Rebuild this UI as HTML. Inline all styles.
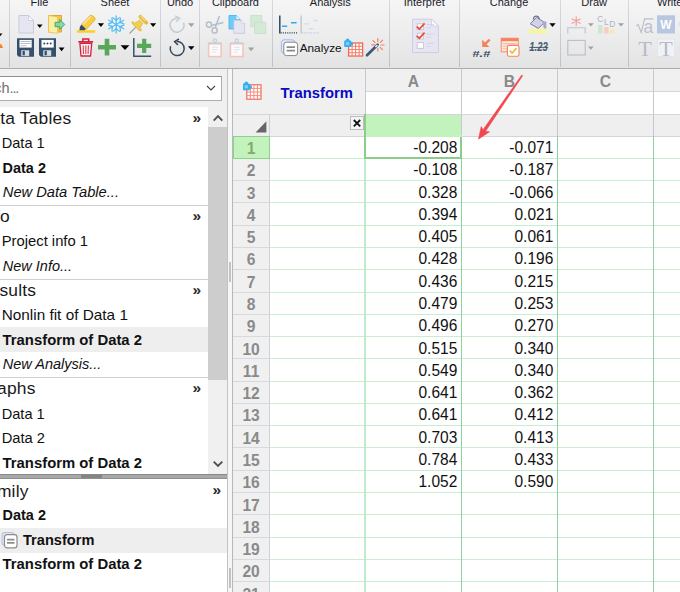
<!DOCTYPE html>
<html><head><meta charset="utf-8"><title>Transform</title>
<style>
html,body{margin:0;padding:0;background:#fff;}
body{width:680px;height:592px;overflow:hidden;font-family:"Liberation Sans",sans-serif;}
#root{position:relative;width:680px;height:592px;overflow:hidden;background:#fff;}
.abs{position:absolute;display:block;}
.hl{left:270px;width:410px;height:1px;background:#c8eed1;}
.hlh{left:233px;width:37px;height:1px;background:#d6d9dd;}
.colh{text-align:center;font-weight:bold;font-size:15.6px;color:#8a8a8a;}
.rown{text-align:center;font-weight:bold;font-size:15.6px;color:#8a8a8a;}
.rown.sel{color:#86a86e;}
.val{text-align:right;font-size:15.5px;color:#111;transform:scaleY(1.1);transform-origin:0 17.4px;}
.title{font-weight:bold;font-size:14.8px;color:#0a0ac2;white-space:nowrap;}
/* toolbar */
#tb{left:0;top:0;width:680px;height:68px;background:linear-gradient(#f5f5f5,#eeeeee 45%,#e3e3e3);}
#tbline{left:0;top:68.3px;width:680px;height:1.2px;background:#acacac;}
.sep{top:0;width:1.4px;height:66.5px;background:linear-gradient(#d6d9df,#bcc2cc);}
.glab{top:-5.2px;font-size:11px;line-height:14px;color:#1a1a2a;white-space:nowrap;}
/* navigator */
#navbg{left:0;top:69px;width:228px;height:523px;background:#f0f0f0;}
.nh{left:0;letter-spacing:0.2px;font-size:17.4px;line-height:24px;height:24px;color:#1a1a1a;white-space:nowrap;}
.ni{left:1.7px;font-size:15px;line-height:24px;height:24px;color:#111;white-space:nowrap;}
.b{font-weight:bold;font-size:14.6px;left:2.6px;}
.i{font-style:italic;font-size:14.5px;left:2.8px;}
.raq{font-size:15.5px;font-weight:bold;line-height:24px;color:#2a2a2a;}

</style></head>
<body>
<div id="root">
<!-- sheet -->
<div class="abs" style="left:233px;top:69px;width:447px;height:23px;background:#f0f0f0"></div>
<div class="abs" style="left:233px;top:69px;width:133px;height:45px;background:#f0f0f0"></div>
<div class="abs" style="left:233px;top:114px;width:447px;height:22px;background:#efefef"></div>
<div class="abs" style="left:366px;top:114px;width:96px;height:22px;background:#c3f3bd"></div>
<div class="abs" style="left:233px;top:136px;width:37px;height:456px;background:#f0f0f0"></div>
<div class="abs" style="left:233px;top:136px;width:37px;height:22px;background:#c3f3bd"></div>
<div class="abs hl" style="top:157.8px"></div>
<div class="abs hlh" style="top:157.8px"></div>
<div class="abs hl" style="top:180.1px"></div>
<div class="abs hlh" style="top:180.1px"></div>
<div class="abs hl" style="top:202.3px"></div>
<div class="abs hlh" style="top:202.3px"></div>
<div class="abs hl" style="top:224.6px"></div>
<div class="abs hlh" style="top:224.6px"></div>
<div class="abs hl" style="top:246.9px"></div>
<div class="abs hlh" style="top:246.9px"></div>
<div class="abs hl" style="top:269.2px"></div>
<div class="abs hlh" style="top:269.2px"></div>
<div class="abs hl" style="top:291.5px"></div>
<div class="abs hlh" style="top:291.5px"></div>
<div class="abs hl" style="top:313.7px"></div>
<div class="abs hlh" style="top:313.7px"></div>
<div class="abs hl" style="top:336.0px"></div>
<div class="abs hlh" style="top:336.0px"></div>
<div class="abs hl" style="top:358.3px"></div>
<div class="abs hlh" style="top:358.3px"></div>
<div class="abs hl" style="top:380.6px"></div>
<div class="abs hlh" style="top:380.6px"></div>
<div class="abs hl" style="top:402.9px"></div>
<div class="abs hlh" style="top:402.9px"></div>
<div class="abs hl" style="top:425.1px"></div>
<div class="abs hlh" style="top:425.1px"></div>
<div class="abs hl" style="top:447.4px"></div>
<div class="abs hlh" style="top:447.4px"></div>
<div class="abs hl" style="top:469.7px"></div>
<div class="abs hlh" style="top:469.7px"></div>
<div class="abs hl" style="top:492.0px"></div>
<div class="abs hlh" style="top:492.0px"></div>
<div class="abs hl" style="top:514.3px"></div>
<div class="abs hlh" style="top:514.3px"></div>
<div class="abs hl" style="top:536.5px"></div>
<div class="abs hlh" style="top:536.5px"></div>
<div class="abs hl" style="top:558.8px"></div>
<div class="abs hlh" style="top:558.8px"></div>
<div class="abs hl" style="top:581.1px"></div>
<div class="abs hlh" style="top:581.1px"></div>
<div class="abs hl" style="top:603.4px"></div>
<div class="abs hlh" style="top:603.4px"></div>
<div class="abs" style="left:366px;top:91px;width:314px;height:1px;background:#d4d6da"></div>
<div class="abs" style="left:233px;top:113.5px;width:447px;height:1px;background:#d4d6da"></div>
<div class="abs" style="left:233px;top:135.5px;width:447px;height:1px;background:#cfd6dc"></div>
<div class="abs" style="left:365.0px;top:69px;width:1px;height:67px;background:#c6c9cf"></div>
<div class="abs" style="left:461.0px;top:69px;width:1px;height:67px;background:#c6c9cf"></div>
<div class="abs" style="left:557.0px;top:69px;width:1px;height:67px;background:#c6c9cf"></div>
<div class="abs" style="left:653.0px;top:69px;width:1px;height:67px;background:#c6c9cf"></div>
<div class="abs" style="left:269px;top:114px;width:1px;height:478px;background:#cdd0d6"></div>
<div class="abs" style="left:232.3px;top:69px;width:1px;height:523px;background:#bcbcbc"></div>
<div class="abs" style="left:364px;top:136px;width:2px;height:456px;background:#bfecc9"></div>
<div class="abs" style="left:461.0px;top:136px;width:1px;height:456px;background:#8bd59c"></div>
<div class="abs" style="left:557.0px;top:136px;width:1px;height:456px;background:#8bd59c"></div>
<div class="abs" style="left:653.0px;top:136px;width:1px;height:456px;background:#8bd59c"></div>
<div class="abs" style="left:364px;top:114px;width:2px;height:45px;background:#8ace8a"></div>
<div class="abs" style="left:364px;top:157px;width:98.3px;height:1.6px;background:#8ace8a"></div>
<div class="abs" style="left:460.3px;top:136px;width:2px;height:22.5px;background:#8ace8a"></div>
<div class="abs" style="left:366px;top:135px;width:95.5px;height:1.5px;background:#c3f3bd"></div>
<div class="abs" style="left:233px;top:136px;width:36.8px;height:22.6px;box-sizing:border-box;border:1.2px solid #8fd08f"></div>
<div class="abs colh" style="left:365.5px;top:69px;width:96px;height:22px;line-height:25px">A</div>
<div class="abs colh" style="left:461.5px;top:69px;width:96px;height:22px;line-height:25px">B</div>
<div class="abs colh" style="left:557.5px;top:69px;width:96px;height:22px;line-height:25px">C</div>
<div class="abs rown sel" style="left:232.6px;top:136.0px;width:37px;height:22px;line-height:25.8px">1</div>
<div class="abs val" style="left:366px;top:136.0px;width:91.3px;height:22px;line-height:24.4px">-0.208</div>
<div class="abs val" style="left:462px;top:136.0px;width:91.3px;height:22px;line-height:24.4px">-0.071</div>
<div class="abs rown" style="left:232.6px;top:158.3px;width:37px;height:22px;line-height:25.8px">2</div>
<div class="abs val" style="left:366px;top:158.3px;width:91.3px;height:22px;line-height:24.4px">-0.108</div>
<div class="abs val" style="left:462px;top:158.3px;width:91.3px;height:22px;line-height:24.4px">-0.187</div>
<div class="abs rown" style="left:232.6px;top:180.6px;width:37px;height:22px;line-height:25.8px">3</div>
<div class="abs val" style="left:366px;top:180.6px;width:91.3px;height:22px;line-height:24.4px">0.328</div>
<div class="abs val" style="left:462px;top:180.6px;width:91.3px;height:22px;line-height:24.4px">-0.066</div>
<div class="abs rown" style="left:232.6px;top:202.8px;width:37px;height:22px;line-height:25.8px">4</div>
<div class="abs val" style="left:366px;top:202.8px;width:91.3px;height:22px;line-height:24.4px">0.394</div>
<div class="abs val" style="left:462px;top:202.8px;width:91.3px;height:22px;line-height:24.4px">0.021</div>
<div class="abs rown" style="left:232.6px;top:225.1px;width:37px;height:22px;line-height:25.8px">5</div>
<div class="abs val" style="left:366px;top:225.1px;width:91.3px;height:22px;line-height:24.4px">0.405</div>
<div class="abs val" style="left:462px;top:225.1px;width:91.3px;height:22px;line-height:24.4px">0.061</div>
<div class="abs rown" style="left:232.6px;top:247.4px;width:37px;height:22px;line-height:25.8px">6</div>
<div class="abs val" style="left:366px;top:247.4px;width:91.3px;height:22px;line-height:24.4px">0.428</div>
<div class="abs val" style="left:462px;top:247.4px;width:91.3px;height:22px;line-height:24.4px">0.196</div>
<div class="abs rown" style="left:232.6px;top:269.7px;width:37px;height:22px;line-height:25.8px">7</div>
<div class="abs val" style="left:366px;top:269.7px;width:91.3px;height:22px;line-height:24.4px">0.436</div>
<div class="abs val" style="left:462px;top:269.7px;width:91.3px;height:22px;line-height:24.4px">0.215</div>
<div class="abs rown" style="left:232.6px;top:292.0px;width:37px;height:22px;line-height:25.8px">8</div>
<div class="abs val" style="left:366px;top:292.0px;width:91.3px;height:22px;line-height:24.4px">0.479</div>
<div class="abs val" style="left:462px;top:292.0px;width:91.3px;height:22px;line-height:24.4px">0.253</div>
<div class="abs rown" style="left:232.6px;top:314.2px;width:37px;height:22px;line-height:25.8px">9</div>
<div class="abs val" style="left:366px;top:314.2px;width:91.3px;height:22px;line-height:24.4px">0.496</div>
<div class="abs val" style="left:462px;top:314.2px;width:91.3px;height:22px;line-height:24.4px">0.270</div>
<div class="abs rown" style="left:232.6px;top:336.5px;width:37px;height:22px;line-height:25.8px">10</div>
<div class="abs val" style="left:366px;top:336.5px;width:91.3px;height:22px;line-height:24.4px">0.515</div>
<div class="abs val" style="left:462px;top:336.5px;width:91.3px;height:22px;line-height:24.4px">0.340</div>
<div class="abs rown" style="left:232.6px;top:358.8px;width:37px;height:22px;line-height:25.8px">11</div>
<div class="abs val" style="left:366px;top:358.8px;width:91.3px;height:22px;line-height:24.4px">0.549</div>
<div class="abs val" style="left:462px;top:358.8px;width:91.3px;height:22px;line-height:24.4px">0.340</div>
<div class="abs rown" style="left:232.6px;top:381.1px;width:37px;height:22px;line-height:25.8px">12</div>
<div class="abs val" style="left:366px;top:381.1px;width:91.3px;height:22px;line-height:24.4px">0.641</div>
<div class="abs val" style="left:462px;top:381.1px;width:91.3px;height:22px;line-height:24.4px">0.362</div>
<div class="abs rown" style="left:232.6px;top:403.4px;width:37px;height:22px;line-height:25.8px">13</div>
<div class="abs val" style="left:366px;top:403.4px;width:91.3px;height:22px;line-height:24.4px">0.641</div>
<div class="abs val" style="left:462px;top:403.4px;width:91.3px;height:22px;line-height:24.4px">0.412</div>
<div class="abs rown" style="left:232.6px;top:425.6px;width:37px;height:22px;line-height:25.8px">14</div>
<div class="abs val" style="left:366px;top:425.6px;width:91.3px;height:22px;line-height:24.4px">0.703</div>
<div class="abs val" style="left:462px;top:425.6px;width:91.3px;height:22px;line-height:24.4px">0.413</div>
<div class="abs rown" style="left:232.6px;top:447.9px;width:37px;height:22px;line-height:25.8px">15</div>
<div class="abs val" style="left:366px;top:447.9px;width:91.3px;height:22px;line-height:24.4px">0.784</div>
<div class="abs val" style="left:462px;top:447.9px;width:91.3px;height:22px;line-height:24.4px">0.433</div>
<div class="abs rown" style="left:232.6px;top:470.2px;width:37px;height:22px;line-height:25.8px">16</div>
<div class="abs val" style="left:366px;top:470.2px;width:91.3px;height:22px;line-height:24.4px">1.052</div>
<div class="abs val" style="left:462px;top:470.2px;width:91.3px;height:22px;line-height:24.4px">0.590</div>
<div class="abs rown" style="left:232.6px;top:492.5px;width:37px;height:22px;line-height:25.8px">17</div>
<div class="abs rown" style="left:232.6px;top:514.8px;width:37px;height:22px;line-height:25.8px">18</div>
<div class="abs rown" style="left:232.6px;top:537.0px;width:37px;height:22px;line-height:25.8px">19</div>
<div class="abs rown" style="left:232.6px;top:559.3px;width:37px;height:22px;line-height:25.8px">20</div>
<div class="abs rown" style="left:232.6px;top:581.6px;width:37px;height:22px;line-height:25.8px">21</div>
<svg class="abs" style="left:243px;top:80px" width="20" height="20" viewBox="0 0 20 20">
<rect x="3.8" y="4.8" width="14.2" height="14.4" fill="#fff" stroke="#f26a55" stroke-width="1.2"/>
<path d="M7.35 4.8V19.2M10.9 4.8V19.2M14.45 4.8V19.2M3.8 8.4H18M3.8 12H18M3.8 15.6H18" stroke="#f58e7c" stroke-width="1" fill="none"/>
<g transform="translate(-0.2 1.4) scale(1.12)"><rect x="0" y="1.9" width="6.3" height="6.1" rx="0.8" fill="#36aef0"/><circle cx="3.1" cy="1.7" r="1.6" fill="#36aef0"/><circle cx="6.7" cy="5" r="1.6" fill="#36aef0"/><rect x="1.6" y="3.4" width="3" height="2.8" fill="#7cd0f8"/></g>
</svg>
<div class="abs title" style="left:280.6px;top:82.6px;line-height:20px">Transform</div>
<svg class="abs" style="left:255px;top:120px" width="13" height="13" viewBox="0 0 13 13"><path d="M11.4 1.2V12.6H0.6z" fill="#666"/></svg>
<div class="abs" style="left:349.6px;top:115.8px;width:12px;height:12px;background:#f4f4f4;border:1px solid #bcbcbc"></div>
<svg class="abs" style="left:349.6px;top:115.8px" width="14" height="14" viewBox="0 0 14 14"><path d="M3.8 4L10.2 10.4M10.2 4L3.8 10.4" stroke="#111" stroke-width="1.8"/></svg>
<svg class="abs" style="left:470px;top:70px" width="60" height="75" viewBox="0 0 60 75">
<path d="M52.7 5.74L15.5 61.35L19.6 61.8L8.4 69.2L11.2 56.5L13.06 59.65L51.7 5.06z" fill="#f1474f" stroke="#f1474f" stroke-width="0.5" stroke-linejoin="round"/>
</svg>
<!-- navigator -->
<div class="abs" id="navbg"></div>
<div class="abs" style="left:-2px;top:76px;width:222px;height:23px;background:#fff;border:1px solid #adadad;border-top-color:#8f8f8f"></div>
<div class="abs" style="left:auto;right:661.8px;top:77.6px;font-size:14.5px;line-height:20px;color:#707070;white-space:nowrap">Search<span style="letter-spacing:-1.15px">...</span></div>
<svg class="abs" style="left:205px;top:83px" width="12" height="10" viewBox="0 0 12 10"><path d="M2 3L6 7L10 3" stroke="#444" stroke-width="1.1" fill="none"/></svg>
<div class="abs" style="left:0;top:107px;width:208px;height:367px;background:#fff"></div>
<div class="abs" style="left:208px;top:107px;width:19.5px;height:367px;background:#f0f0f0"></div>
<div class="abs" style="left:208px;top:127px;width:19.5px;height:253px;background:#cdcdcd"></div>
<svg class="abs" style="left:212px;top:113px" width="12" height="10" viewBox="0 0 12 10"><path d="M1.7 7.6L6 3.2L10.3 7.6" stroke="#505050" stroke-width="1.9" fill="none"/></svg>
<svg class="abs" style="left:212px;top:459px" width="12" height="10" viewBox="0 0 12 10"><path d="M1.7 2.6L6 7L10.3 2.6" stroke="#505050" stroke-width="1.9" fill="none"/></svg>
<div class="abs" style="left:228.3px;top:69px;width:4px;height:523px;background:#f6f6f6"></div>
<div class="abs" style="left:232.2px;top:69px;width:1px;height:523px;background:#b8b8b8"></div>
<div class="abs nh" style="left:auto;right:608.7px;top:106.0px">Data Tables</div>
<div class="abs raq" style="left:192.5px;top:105.7px">»</div>
<div class="abs ni" style="top:131.1px;font-size:14.60px">Data 1</div>
<div class="abs ni b" style="top:155.7px;font-size:14.45px">Data 2</div>
<div class="abs ni i" style="top:180.2px;font-size:14.70px">New Data Table...</div>
<div class="abs" style="left:0;top:205.3px;width:208px;height:1px;background:#d0d0d0"></div>
<div class="abs nh" style="left:auto;right:670.0px;top:204.3px">Info</div>
<div class="abs raq" style="left:192.5px;top:204.0px">»</div>
<div class="abs ni" style="top:229.4px;font-size:14.80px">Project info 1</div>
<div class="abs ni i" style="top:254.0px;font-size:14.50px">New Info...</div>
<div class="abs" style="left:0;top:279.1px;width:208px;height:1px;background:#d0d0d0"></div>
<div class="abs nh" style="left:auto;right:643.8px;top:278.1px">Results</div>
<div class="abs raq" style="left:192.5px;top:277.8px">»</div>
<div class="abs ni" style="top:303.1px;font-size:15.35px">Nonlin fit of Data 1</div>
<div class="abs" style="left:0;top:326.7px;width:208px;height:25px;background:#eeeeee"></div>
<div class="abs ni b" style="top:327.7px;font-size:14.85px">Transform of Data 2</div>
<div class="abs ni i" style="top:352.3px;font-size:14.50px">New Analysis...</div>
<div class="abs" style="left:0;top:377.4px;width:208px;height:1px;background:#d0d0d0"></div>
<div class="abs nh" style="left:auto;right:644.4px;top:376.4px">Graphs</div>
<div class="abs raq" style="left:192.5px;top:376.1px">»</div>
<div class="abs ni" style="top:401.5px;font-size:14.60px">Data 1</div>
<div class="abs ni" style="top:426.0px;font-size:14.70px">Data 2</div>
<div class="abs ni b" style="top:450.6px;font-size:14.85px">Transform of Data 2</div>
<div class="abs" style="left:0;top:473.7px;width:227.3px;height:5px;background:#a8a8a8;border-top:1px solid #8a8a8a;border-bottom:1px solid #909090;box-sizing:border-box"></div>
<div class="abs" style="left:81px;top:474.5px;width:21px;height:3.3px;background:#848484"></div>
<div class="abs" style="left:0;top:479px;width:227.3px;height:113px;background:#fff"></div>
<div class="abs nh" style="left:auto;right:651.4px;top:479.0px">Family</div>
<div class="abs raq" style="left:212.5px;top:478.4px">»</div>
<div class="abs ni b" style="top:503.2px;font-size:14.45px">Data 2</div>
<div class="abs" style="left:0;top:528.1px;width:227.3px;height:24.5px;background:#eeeeee"></div>
<svg class="abs" style="left:1px;top:530.6px" width="18" height="19" viewBox="0 0 18 18" preserveAspectRatio="none">
<rect x="1" y="1.5" width="12" height="12" rx="2.5" fill="#d9e4f5" stroke="#b9c3d3" stroke-width="1"/>
<rect x="3.5" y="3.5" width="12.5" height="12.5" rx="2.5" fill="#fff" stroke="#8d8d8d" stroke-width="1.2"/>
<path d="M6 8.2h7.5M6 11.2h7.5" stroke="#8d8d8d" stroke-width="1.6"/></svg>
<div class="abs ni b" style="left:23px;top:527.8px;font-size:14.6px">Transform</div>
<div class="abs ni b" style="top:552.4px;font-size:14.85px">Transform of Data 2</div>
<div class="abs" style="left:229px;top:262px;width:2.4px;height:20px;background:#c2c2c2"></div>
<div class="abs" style="left:229px;top:568px;width:2.4px;height:20px;background:#c2c2c2"></div>
<div class="abs" style="left:227.3px;top:69px;width:1px;height:523px;background:#c2c2c2"></div>
<!-- toolbar -->
<div class="abs" id="tb"></div>
<div class="abs" id="tbline"></div>
<div class="abs sep" style="left:8.9px"></div>
<div class="abs sep" style="left:70.1px"></div>
<div class="abs sep" style="left:160.1px"></div>
<div class="abs sep" style="left:198.9px"></div>
<div class="abs sep" style="left:272.0px"></div>
<div class="abs sep" style="left:388.9px"></div>
<div class="abs sep" style="left:458.9px"></div>
<div class="abs sep" style="left:559.8px"></div>
<div class="abs sep" style="left:628.0px"></div>
<div class="abs glab" style="left:30.6px">File</div>
<div class="abs glab" style="left:100.6px">Sheet</div>
<div class="abs glab" style="left:166.9px">Undo</div>
<div class="abs glab" style="left:211.9px">Clipboard</div>
<div class="abs glab" style="left:309.8px">Analysis</div>
<div class="abs glab" style="left:403.8px">Interpret</div>
<div class="abs glab" style="left:489.8px">Change</div>
<div class="abs glab" style="left:581.3px">Draw</div>
<div class="abs glab" style="left:657.0px">Write</div>
<svg class="abs" style="left:0;top:0" width="680" height="68" viewBox="0 0 680 68">
<path d="M-3.00 33.50H2.50L-0.25 36.50z" fill="#000"/>
<path d="M-2 48L1 43.5L3 48z" fill="#f58220"/>
<path d="M19 15.5h9.5l5 5V33H19z" fill="#e6e6f2" stroke="#c9c9dc" stroke-width="1"/>
<path d="M28.5 15.5v5h5z" fill="#fafafd" stroke="#c9c9dc" stroke-width="0.8"/>
<path d="M37.00 24.40H42.60L39.80 28.00z" fill="#000"/>
<path d="M48.5 15.5H61.5V32H48.5z" fill="#f2c64a" stroke="#d9a832" stroke-width="1"/>
<path d="M48.5 15.5L57.5 17V33.5L48.5 32z" fill="#fcf0a0" stroke="#e4c458" stroke-width="0.8"/>
<path d="M55 22.3h4.8v-2.8l5 5-5 5v-2.8H55z" fill="#86d6a6" stroke="#36a272" stroke-width="0.9"/>
<path d="M17.0 38.2H34.0V56.8H18.8L17.0 55z" fill="#34506c"/>
<rect x="19.5" y="39.9" width="12.2" height="7.7" fill="#fff"/>
<rect x="21.2" y="50.3" width="8" height="5.6" fill="#d7dde6"/>
<rect x="22.6" y="51" width="2.2" height="4.2" fill="#34495e"/>
<path d="M39.0 38.2H56.0V56.8H40.8L39.0 55z" fill="#34506c"/>
<rect x="41.5" y="39.9" width="12.2" height="7.7" fill="#fff"/>
<rect x="43.2" y="50.3" width="8" height="5.6" fill="#d7dde6"/>
<rect x="44.6" y="51" width="2.2" height="4.2" fill="#34495e"/>
<path d="M20.6 41.5H30.8M20.6 43.5H30.8" stroke="#98a2ae" stroke-width="0.7"/><path d="M20.6 45.7H26.6" stroke="#c6ccd4" stroke-width="1.3"/>
<circle cx="44.3" cy="43.5" r="1" fill="#34495e"/><circle cx="47.5" cy="43.5" r="1" fill="#34495e"/><circle cx="50.7" cy="43.5" r="1" fill="#34495e"/>
<path d="M58.70 47.50H64.50L61.60 51.20z" fill="#000"/>
<rect x="76.8" y="30.3" width="18.4" height="2.4" fill="#fcd116"/>
<path d="M81.4 24.6L89.6 15.9Q91 14.6 92.6 15.9L94.6 17.6Q95.8 19 94.6 20.4L86.2 29.4z" fill="#f7cd4a" stroke="#e2ab2e" stroke-width="0.8"/>
<path d="M80 26.4L81.5 24.8L85.9 29L84.6 30.2H79.4z" fill="#3b4a6b"/>
<path d="M83.6 23.8L90.4 16.8" stroke="#fbe7a0" stroke-width="1.3" stroke-linecap="round"/>
<path d="M97.80 23.20H104.00L100.90 27.00z" fill="#000"/>
<g stroke="#4dbcf4" stroke-width="1.2" fill="none" stroke-linecap="round">
<path d="M116.20 24.50L116.20 33.10"/>
<path d="M116.20 28.80L119.51 31.39"/>
<path d="M116.20 28.80L112.89 31.39"/>
<path d="M116.20 24.50L108.75 28.80"/>
<path d="M112.48 26.65L111.89 30.81"/>
<path d="M112.48 26.65L108.58 25.08"/>
<path d="M116.20 24.50L108.75 20.20"/>
<path d="M112.48 22.35L108.58 23.92"/>
<path d="M112.48 22.35L111.89 18.19"/>
<path d="M116.20 24.50L116.20 15.90"/>
<path d="M116.20 20.20L112.89 17.61"/>
<path d="M116.20 20.20L119.51 17.61"/>
<path d="M116.20 24.50L123.65 20.20"/>
<path d="M119.92 22.35L120.51 18.19"/>
<path d="M119.92 22.35L123.82 23.92"/>
<path d="M116.20 24.50L123.65 28.80"/>
<path d="M119.92 26.65L123.82 25.08"/>
<path d="M119.92 26.65L120.51 30.81"/>
</g>
<path d="M129.9 33.1L135.4 27.6" stroke="#9c9c9c" stroke-width="1.3" stroke-linecap="round"/>
<path d="M134.05 23.85L139.15 28.95L142.9 23.4L139.6 20.1z" fill="#f2cf52" stroke="#dcae34" stroke-width="0.6"/>
<path d="M132.9 22.7L140.3 30.1" stroke="#e9bf3c" stroke-width="2.8" stroke-linecap="round"/>
<path d="M133.6 22.9L139.2 28.5" stroke="#f8e08a" stroke-width="1" stroke-linecap="round"/>
<path d="M140.3 16.7L146.3 22.7" stroke="#e6ba38" stroke-width="3.6" stroke-linecap="round"/>
<path d="M140.8 16.4L145.2 20.8" stroke="#f8df86" stroke-width="1.1" stroke-linecap="round"/>
<path d="M150.00 23.20H156.20L153.10 27.00z" fill="#000"/>
<path d="M79 41.8H92.4" stroke="#d3213d" stroke-width="1.7" stroke-linecap="round"/>
<path d="M82.9 41.4V38.9H88.7V41.4" stroke="#d3213d" stroke-width="1.5" fill="none"/>
<path d="M79.9 43.4L81 56H90.6L91.7 43.4z" fill="#fdeef0" stroke="#d3213d" stroke-width="1.3" stroke-linejoin="round"/>
<path d="M83.2 45.4L83.5 54M85.8 45.4V54M88.4 45.4L88.1 54" stroke="#d8405a" stroke-width="1.1"/>
<path d="M98 47.2H116M107 38.8V55.6" stroke="#58a85c" stroke-width="4.6"/>
<path d="M120.60 45.20H129.40L125.00 50.00z" fill="#000"/>
<path d="M133.8 38V56.2H151.2" stroke="#3a506e" stroke-width="1.5" fill="none"/>
<path d="M137 45.8H151.2M144.2 38.8V53" stroke="#58a85c" stroke-width="4.2"/>
<path d="M183.6 22.7A7 7 0 1 1 177.6 18.2" stroke="#c3cbd4" stroke-width="1.5" fill="none"/>
<path d="M175.2 15.8L179.6 18.2L176.2 21.6" stroke="#c3cbd4" stroke-width="1.5" fill="none"/>
<path d="M188.00 23.20H194.50L191.25 27.00z" fill="#a2a2a2"/>
<path d="M170.6 46.2A7 7 0 1 0 176.6 41.6" stroke="#34495e" stroke-width="1.5" fill="none"/>
<path d="M179 39L174.6 41.6L178 45" stroke="#34495e" stroke-width="1.5" fill="none"/>
<path d="M188.00 46.20H194.50L191.25 50.00z" fill="#000"/>
<g stroke="#b3bfcc" stroke-width="1.5" fill="none"><circle cx="209" cy="24.6" r="2.6"/><circle cx="214.6" cy="30.4" r="2.6"/><path d="M211.4 25.4L223.4 22.4M215.2 27.8L219.4 16"/></g>
<path d="M229 15.5H236.5L240 19V29H229z" fill="#6ecbfa" stroke="#44aeee" stroke-width="0.8"/>
<path d="M236.5 15.5V19H240z" fill="#eaf6fe"/>
<path d="M233.8 20.3H241.3L244.6 23.6V33.3H233.8z" fill="#e6e6f2" stroke="#c4c4d8" stroke-width="0.8"/>
<path d="M241.3 20.3V23.6H244.6z" fill="#fff" stroke="#c4c4d8" stroke-width="0.6"/>
<rect x="250.8" y="15.5" width="11" height="11.3" fill="#d4ead6" stroke="#c2dfc5" stroke-width="0.8"/>
<rect x="254.6" y="22.2" width="11.2" height="11.2" fill="#d4ead6" stroke="#c2dfc5" stroke-width="0.8"/>
<rect x="208.6" y="43.6" width="12.6" height="13" fill="#fbfbfc" stroke="#f4c4ba" stroke-width="1.6"/>
<rect x="208.2" y="42.4" width="13.4" height="1.8" fill="#c9cdd6"/>
<circle cx="214.9" cy="40.6" r="1.7" fill="none" stroke="#c9cdd6" stroke-width="1.2"/>
<path d="M212.0 47.2h6M212.0 49.6h6M212.0 52h4" stroke="#dde0e6" stroke-width="0.9"/>
<rect x="230.4" y="43.6" width="12.6" height="13" fill="#fbfbfc" stroke="#f4c4ba" stroke-width="1.6"/>
<rect x="230.0" y="42.4" width="13.4" height="1.8" fill="#c9cdd6"/>
<circle cx="236.7" cy="40.6" r="1.7" fill="none" stroke="#c9cdd6" stroke-width="1.2"/>
<path d="M233.8 47.2h6M233.8 49.6h6M233.8 52h4" stroke="#dde0e6" stroke-width="0.9"/>
<path d="M248.00 47.60H254.20L251.10 51.20z" fill="#a2a2a2"/>
<path d="M279.8 15.6V33.4" stroke="#2f4560" stroke-width="1.5"/>
<path d="M280.6 32.8H297.6" stroke="#2f4560" stroke-width="1.2" stroke-dasharray="1.1 1.1"/>
<path d="M282 26.3H287.2M291 22.8H296.6" stroke="#2eaaf0" stroke-width="1.6"/>
<path d="M301.2 15.6V33.4" stroke="#c3cad3" stroke-width="1.5"/>
<path d="M302 32.8H318.8" stroke="#c3cad3" stroke-width="1.2" stroke-dasharray="1.1 1.1"/>
<path d="M313.5 20.5H317.8M304.4 23.8H308.6M308.6 28.6H313.6" stroke="#bfe3f8" stroke-width="1.3"/>
<rect x="281.4" y="39.8" width="13.4" height="13.4" rx="2.6" fill="#dfe9fa" stroke="#9db6e2" stroke-width="0.9"/>
<rect x="283.8" y="42.2" width="13.8" height="13.4" rx="2.6" fill="#fff" stroke="#868686" stroke-width="1"/>
<path d="M286.6 47.2H295M286.6 50.6H295" stroke="#8b8b8b" stroke-width="1.8"/>
<text x="299.7" y="51.6" font-size="11.8" fill="#111" font-family="Liberation Sans, sans-serif">Analyze</text>
<rect x="348.6" y="43" width="14" height="13" fill="#fff" stroke="#f2664f" stroke-width="1.3"/>
<path d="M352.1 43V56M355.6 43V56M359.1 43V56M348.6 46.3H362.6M348.6 49.5H362.6M348.6 52.8H362.6" stroke="#f47f6a" stroke-width="1.1" fill="none"/>
<g transform="translate(344.2 38.3) scale(1.1)"><rect x="0" y="1.9" width="6.3" height="6.1" rx="0.8" fill="#36aef0"/><circle cx="3.1" cy="1.7" r="1.6" fill="#36aef0"/><circle cx="6.7" cy="5" r="1.6" fill="#36aef0"/><rect x="1.6" y="3.4" width="3" height="2.8" fill="#7cd0f8"/></g>
<path d="M367 55.2L377.6 44.8" stroke="#3a5a82" stroke-width="2.7" stroke-linecap="round"/>
<path d="M375.4 47L377.4 45" stroke="#eef2f7" stroke-width="1.5"/>
<g stroke="#f5825c" stroke-width="1.2" stroke-linecap="round"><path d="M377.8 41.6V38.6M380.4 42.4L382.6 40.2M381 45H384M380.2 47.4L382.4 49.6M377.8 48.4V51M375 42.6L373 40.6M374.6 44.8H371.8"/></g>
<path d="M412.6 19.2H431.6L438.4 26V52.6H412.6z" fill="#e6e6f3" stroke="#cdcde0" stroke-width="1"/>
<path d="M431.6 19.2V26H438.4z" fill="#fbfbfe" stroke="#cdcde0" stroke-width="0.8"/>
<rect x="417.2" y="23.8" width="6.2" height="5.8" fill="#fff" stroke="#c4c4d6" stroke-width="0.9"/>
<rect x="417.2" y="33.2" width="6.2" height="5.8" fill="#fff" stroke="#c4c4d6" stroke-width="0.9"/>
<rect x="417.2" y="42.6" width="6.2" height="5.8" fill="#fff" stroke="#c4c4d6" stroke-width="0.9"/>
<path d="M426.4 24.6h7.4M426.4 27.8h4.6" stroke="#d3d3e2" stroke-width="1"/>
<path d="M426.4 34.0h7.4M426.4 37.2h4.6" stroke="#d3d3e2" stroke-width="1"/>
<path d="M426.4 43.4h7.4M426.4 46.6h4.6" stroke="#d3d3e2" stroke-width="1"/>
<path d="M416.6 26.6L419.4 29.0L424.6 23.4" stroke="#f04a36" stroke-width="1.7" fill="none"/>
<path d="M416.6 35.8L419.4 38.2L424.6 32.6" stroke="#f04a36" stroke-width="1.7" fill="none"/>
<text x="472.2" y="56.5" font-size="9.3" font-weight="bold" font-style="italic" fill="#34495e" font-family="Liberation Sans, sans-serif" textLength="18.2" lengthAdjust="spacingAndGlyphs">#.#</text>
<path d="M490.4 40.4L486.6 44.2L489.4 47H482.2V39.8L485 42.6L488.8 38.8z" fill="#f5825c"/>
<rect x="501.2" y="38.2" width="17" height="13.6" fill="#fde9e3" stroke="#f5825c" stroke-width="0.9"/>
<rect x="501.2" y="38.2" width="17" height="3" fill="#f5825c"/>
<path d="M502.6 43.6h14M502.6 46.2h14M502.6 48.8h14" stroke="#f9b9a6" stroke-width="1.1"/>
<rect x="507.4" y="45.4" width="11.6" height="10.8" rx="1.8" fill="#fff" stroke="#f5825c" stroke-width="1.1"/>
<path d="M509.8 50.6L512.2 53L516.6 48" stroke="#f7b52c" stroke-width="1.7" fill="none"/>
<rect x="528.8" y="29" width="18.2" height="4.5" fill="#f6f6a0"/>
<path d="M530.2 23.8L536.6 17.4L544.4 22.4L538.4 28.4z" fill="#d2d2e4" stroke="#7a7ca0" stroke-width="1"/>
<path d="M533.4 19.6C533.2 15.6 538.2 14.6 539.4 19" stroke="#6f7196" stroke-width="1.1" fill="none"/>
<path d="M542.6 21.6H546.4V28.6H543.8z" fill="#a7a9c8"/>
<path d="M549.40 23.20H555.60L552.50 27.00z" fill="#000"/>
<text x="529.2" y="51.2" font-size="12" font-weight="bold" font-style="italic" fill="#4a5d75" font-family="Liberation Sans, sans-serif" textLength="18.6" lengthAdjust="spacingAndGlyphs">1.23</text>
<path d="M529.4 47.4H548.2" stroke="#34495e" stroke-width="0.9"/>
<g stroke="#f4988e" stroke-width="1.1" stroke-linecap="round"><path d="M576.2 16.8V25.4M572.2 19L580.2 23.2M580.2 19L572.2 23.2"/></g>
<path d="M567.8 33.4V27.8H585.2V33.4" stroke="#bcc5d0" stroke-width="1.1" fill="none"/>
<path d="M588.00 23.20H593.80L590.90 26.60z" fill="#a2a2a2"/>
<rect x="567.8" y="40.4" width="17.4" height="14.6" fill="none" stroke="#b6bfcb" stroke-width="1.1"/>
<path d="M588.00 46.40H593.80L590.90 49.80z" fill="#a2a2a2"/>
<rect x="598" y="25" width="4.6" height="8.5" fill="#cfe6cf"/><rect x="604" y="27" width="4.6" height="6.5" fill="#f8cdc6"/><rect x="610" y="29.4" width="4.4" height="4.1" fill="#fbe6ae"/>
<g font-size="8.4" fill="#aab5c4" font-family="Liberation Sans, sans-serif"><text x="597.2" y="22.4">C</text><text x="604" y="25.4">L</text><text x="609.2" y="27">D</text></g>
<path d="M618.00 23.20H624.00L621.00 26.60z" fill="#a2a2a2"/>
<path d="M636.2 25.8L638.2 24.6L641.2 32.4L644.6 18.9H653.4" stroke="#b4becb" stroke-width="1.1" fill="none"/>
<text x="643.4" y="32.7" font-size="17.5" fill="#b9c2ce" font-family="Liberation Sans, sans-serif">a</text>
<rect x="657" y="15.3" width="18" height="18.2" fill="#b7c7e1"/>
<text x="666" y="29.4" font-size="12" font-weight="bold" fill="#fff" text-anchor="middle" font-family="Liberation Sans, sans-serif">W</text>
<text x="645" y="55.6" font-size="22" fill="#b3bccb" text-anchor="middle" font-family="Liberation Serif, serif">T</text>
<rect x="657.4" y="39" width="17.4" height="17.4" fill="#f1f2f5" stroke="#dfe3ea" stroke-width="0.8"/>
<text x="666" y="55.6" font-size="22" fill="#b3bccb" text-anchor="middle" font-family="Liberation Serif, serif">T</text>
<circle cx="682" cy="24" r="3.6" fill="#e1e4ea"/><circle cx="682" cy="48" r="3.6" fill="#e1e4ea"/>
</svg>
</div>
</body></html>
